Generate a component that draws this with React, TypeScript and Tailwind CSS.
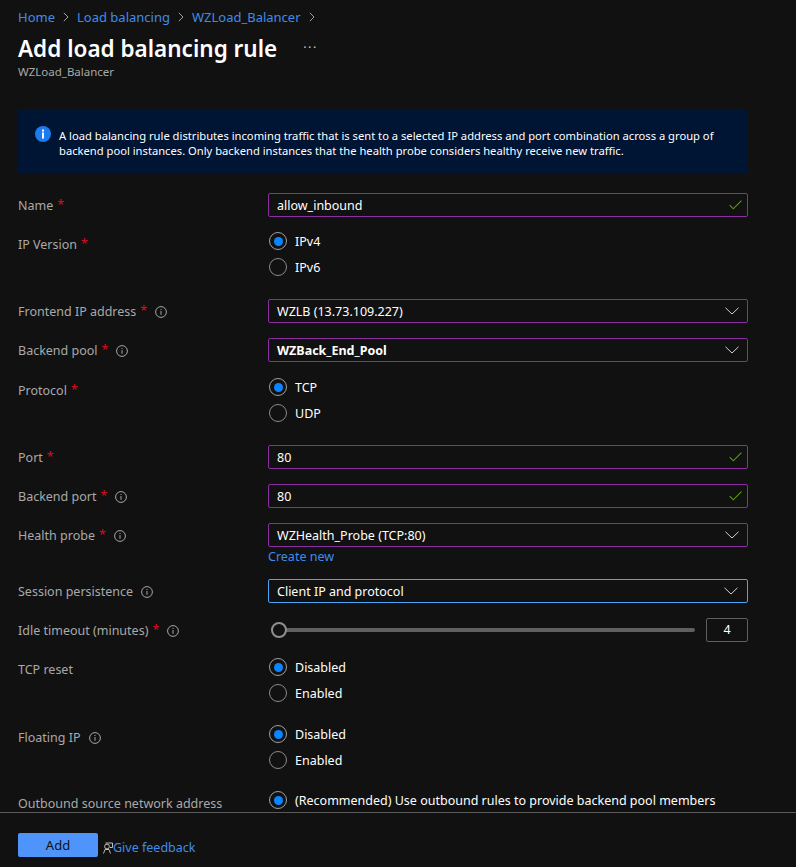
import type { ReactNode } from 'react';

function InfoIcon() {
  return (
    <svg width="12" height="12" viewBox="0 0 12 12" fill="none" className="shrink-0">
      <circle cx="6" cy="6" r="5.4" stroke="#a6a6a6" strokeWidth="1" />
      <rect x="5.5" y="5" width="1" height="3.8" fill="#a6a6a6" />
      <rect x="5.5" y="3" width="1" height="1" fill="#a6a6a6" />
    </svg>
  );
}

function Chevron() {
  return (
    <svg width="14" height="8" viewBox="0 0 14 8" fill="none" className="shrink-0">
      <path d="M0.5 0.8 L7 7 L13.5 0.8" stroke="#d0d0d0" strokeWidth="1" />
    </svg>
  );
}

function Check() {
  return (
    <svg width="13" height="10" viewBox="0 0 13 10" fill="none" className="-mr-[3px] shrink-0">
      <path d="M0.7 5.2 L4.3 8.8 L12.4 0.7" stroke="#57a300" strokeWidth="1.1" />
    </svg>
  );
}

function Crumb() {
  return (
    <svg width="6" height="10" viewBox="0 0 6 10" fill="none" className="mx-[8px] shrink-0">
      <path d="M0.8 0.8 L5 5 L0.8 9.2" stroke="#a0a0a0" strokeWidth="1" />
    </svg>
  );
}

function Label({ text, required, info }: { text: string; required?: boolean; info?: boolean }) {
  return (
    <div className="flex items-center text-[#a9a9a9]">
      <span className="pt-[2px]">{text}</span>
      {required ? <span className="ml-1 text-[#d8101f]">*</span> : null}
      {info ? (
        <span className="ml-2 flex pt-[2px]">
          <InfoIcon />
        </span>
      ) : null}
    </div>
  );
}

function Field({
  children,
  icon,
  focused,
  bold,
}: {
  children: ReactNode;
  icon: ReactNode;
  focused?: boolean;
  bold?: boolean;
}) {
  return (
    <div
      className={`flex h-6 w-[480px] items-center justify-between rounded-[2px] border pl-2 pr-2 text-white ${
        focused ? 'border-[#4aa4f5] pr-[9px]' : 'border-[#8b2da0]'
      } ${bold ? 'font-bold' : ''}`}
    >
      <span className="pt-px">{children}</span>
      {icon}
    </div>
  );
}

function Radio({ label, checked }: { label: string; checked?: boolean }) {
  return (
    <div className="flex h-[26px] items-center text-white">
      <span
        className={`ml-px mr-2 flex h-[18px] w-[18px] items-center justify-center rounded-full border ${
          checked ? 'border-[#a0a0a0]' : 'border-[#8a8a8a]'
        }`}
      >
        {checked ? <span className="h-[9px] w-[9px] rounded-full bg-[#0a84ff]" /> : null}
      </span>
      <span className="pt-[2px]">{label}</span>
    </div>
  );
}

function Row({ label, children, className }: { label: ReactNode; children: ReactNode; className?: string }) {
  return (
    <div className={`flex ${className ?? ''}`}>
      <div className="w-[250px] shrink-0">{label}</div>
      <div>{children}</div>
    </div>
  );
}

export default function App() {
  return (
    <div
      className="flex h-[867px] w-[796px] flex-col overflow-hidden bg-[#111111] text-[12.5px] leading-[18px]"
      style={{ fontFamily: '"Noto Sans", sans-serif' }}
    >
      <div className="min-h-0 flex-1 overflow-hidden px-[18px]">
        <nav className="flex h-[18px] items-center pt-[16px] text-[13px] text-[#3f8cec]">
          <span>Home</span>
          <Crumb />
          <span>Load balancing</span>
          <Crumb />
          <span>WZLoad_Balancer</span>
          <Crumb />
        </nav>
        <div className="mt-[15px] flex items-center">
          <h1 className="text-[22.5px] leading-[32px] font-semibold text-white">Add load balancing rule</h1>
          <span className="ml-[26px] -translate-y-px tracking-[1.5px] text-[#c8c8c8]">···</span>
        </div>
        <div className="-mt-px text-[11.5px] leading-[16px] text-[#a9a9a9]">WZLoad_Balancer</div>

        <div className="mt-[29px] flex h-16 w-[730px] items-center bg-[#001433] pl-[17px] text-white">
          <svg width="16" height="16" viewBox="0 0 16 16" className="mr-2 shrink-0 -translate-y-[7px]">
            <circle cx="8" cy="8" r="8" fill="#1a7cf0" />
            <rect x="7" y="6.5" width="2" height="6" fill="#fff" />
            <rect x="7" y="3.5" width="2" height="2" fill="#fff" />
          </svg>
          <p className="pt-[3px] text-[11.2px] leading-[15px] whitespace-nowrap">
            A load balancing rule distributes incoming traffic that is sent to a selected IP address and port combination across a group of
            <br />
            backend pool instances. Only backend instances that the health probe considers healthy receive new traffic.
          </p>
        </div>

        <Row className="mt-[20px] items-center" label={<Label text="Name" required />}>
          <Field icon={<Check />}>allow_inbound</Field>
        </Row>
        <Row className="mt-[11px]" label={<div className="pt-[6px]"><Label text="IP Version" required /></div>}>
          <Radio label="IPv4" checked />
          <Radio label="IPv6" />
        </Row>
        <Row className="mt-[19px] items-center" label={<Label text="Frontend IP address" required info />}>
          <Field icon={<Chevron />}>WZLB (13.73.109.227)</Field>
        </Row>
        <Row className="mt-[15px] items-center" label={<Label text="Backend pool" required info />}>
          <Field icon={<Chevron />} bold>
            WZBack_End_Pool
          </Field>
        </Row>
        <Row className="mt-3" label={<div className="pt-[6px]"><Label text="Protocol" required /></div>}>
          <Radio label="TCP" checked />
          <Radio label="UDP" />
        </Row>
        <Row className="mt-[19px] items-center" label={<Label text="Port" required />}>
          <Field icon={<Check />}>80</Field>
        </Row>
        <Row className="mt-[15px] items-center" label={<Label text="Backend port" required info />}>
          <Field icon={<Check />}>80</Field>
        </Row>
        <Row className="mt-[15px]" label={<div className="pt-[2px]"><Label text="Health probe" required info /></div>}>
          <Field icon={<Chevron />}>WZHealth_Probe (TCP:80)</Field>
          <div className="mt-[1px] text-[#3f8cec]">Create new</div>
        </Row>
        <Row className="mt-[13px] items-center" label={<Label text="Session persistence" info />}>
          <Field icon={<Chevron />} focused>
            Client IP and protocol
          </Field>
        </Row>
        <Row className="mt-[15px] items-center" label={<Label text="Idle timeout (minutes)" required info />}>
          <div className="flex w-[480px] items-center">
            <div className="relative ml-[3px] h-1 w-[424px] rounded-full bg-[#5f5f5f]">
              <span className="absolute top-1/2 left-0 h-4 w-4 -translate-y-1/2 rounded-full border-2 border-[#8f8f8f] bg-[#111111]" />
            </div>
            <div className="ml-[11px] flex h-6 w-[42px] items-center justify-center rounded-[2px] border border-[#5f5f5f] text-white">
              4
            </div>
          </div>
        </Row>
        <Row className="mt-3" label={<div className="pt-[5px]"><Label text="TCP reset" /></div>}>
          <Radio label="Disabled" checked />
          <Radio label="Enabled" />
        </Row>
        <Row className="mt-[15px]" label={<div className="pt-[6px]"><Label text="Floating IP" info /></div>}>
          <Radio label="Disabled" checked />
          <Radio label="Enabled" />
        </Row>
        <Row className="mt-[14px]" label={<div className="pt-[6px]"><Label text="Outbound source network address" /></div>}>
          <Radio label="(Recommended) Use outbound rules to provide backend pool members" checked />
        </Row>
      </div>

      <footer className="flex h-[55px] shrink-0 items-start border-t border-[#5a5a5a] pt-[20px] pl-[18px]">
        <button className="h-6 w-20 rounded-[2px] bg-[#4f94fb] text-[13px] text-[#111111]">Add</button>
        <div className="mt-px ml-[5px] flex h-7 items-center text-[#3f8cec]">
          <svg width="10" height="12" viewBox="0 0 10 12" fill="none" className="shrink-0">
            <path d="M2.5 1 H9.5 V5.5 H7" stroke="#d0d0d0" strokeWidth="0.9" />
            <circle cx="4" cy="4.5" r="2.4" stroke="#d0d0d0" strokeWidth="0.9" />
            <path d="M0.5 11.5 L2 7.5 H6 L7.5 11.5" stroke="#d0d0d0" strokeWidth="0.9" />
          </svg>
          <span>Give feedback</span>
        </div>
      </footer>
    </div>
  );
}
